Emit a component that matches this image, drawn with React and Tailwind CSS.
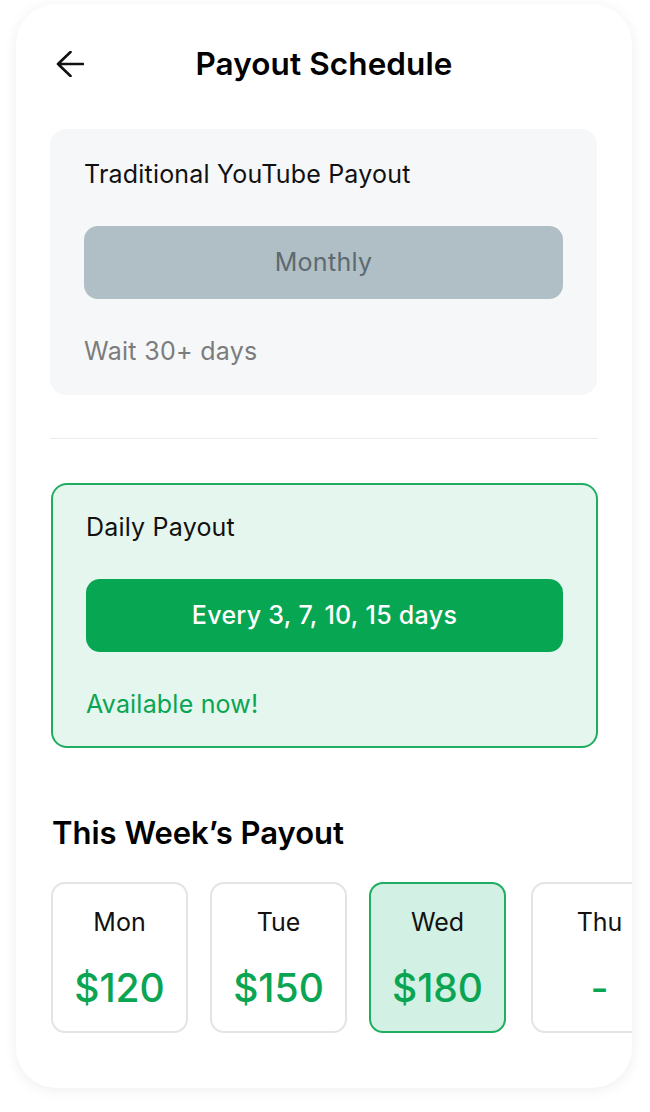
const days = [
  { name: "Mon", amount: "$120" },
  { name: "Tue", amount: "$150" },
  { name: "Wed", amount: "$180", active: true },
  { name: "Thu", amount: "-" },
];

const App = () => {
  return (
    <div
      className="min-h-screen bg-white pt-[4px] px-[16px]"
      style={{ fontFamily: "Inter, 'Noto Sans', sans-serif" }}
    >
      <div className="w-[616px] h-[1084px] bg-white rounded-[40px] overflow-hidden shadow-[0_2px_14px_rgba(0,0,0,0.07)] px-[34px] pt-[30px]">
        {/* Header */}
        <div className="relative h-[60px] flex items-center justify-center">
          <button className="absolute left-[6px] top-1/2 -translate-y-1/2">
            <svg width="28" height="26" viewBox="0 0 28 26" fill="none">
              <path
                d="M27 13H2M14.5 1L2 13L14.5 25"
                stroke="#111"
                strokeWidth="2.6"
                strokeLinecap="round"
                strokeLinejoin="round"
              />
            </svg>
          </button>
          <h1 className="text-[31.5px] font-semibold text-black leading-[40px] tracking-[0.1px]">
            Payout Schedule
          </h1>
        </div>

        {/* Traditional card */}
        <div className="mt-[35px] mr-px bg-[#f6f7f9] rounded-[16px] px-[34px] pt-[29px] pb-[28px]">
          <p className="text-[25px] leading-[32px] tracking-[0.2px] text-[#111]">
            Traditional YouTube Payout
          </p>
          <div className="mt-[36px] h-[73px] rounded-[14px] bg-[#b0bec5] flex items-center justify-center">
            <span className="text-[25px] tracking-[0.3px] text-[#5d6a71]">Monthly</span>
          </div>
          <p className="mt-[36px] text-[25px] leading-[32px] tracking-[0.3px] text-[#7c7c7c]">
            Wait 30+ days
          </p>
        </div>

        <div className="mt-[43px] h-px bg-[#ececec]" />

        {/* Daily card */}
        <div className="mt-[44px] ml-px bg-[#e5f6ee] border-2 border-[#1fae5f] rounded-[16px] px-[33px] pt-[26px] pb-[26px]">
          <p className="text-[25px] leading-[32px] tracking-[0.2px] text-[#111]">Daily Payout</p>
          <div className="mt-[36px] h-[73px] rounded-[14px] bg-[#07a653] flex items-center justify-center">
            <span className="text-[25px] font-medium tracking-[0.3px] text-white">
              Every 3, 7, 10, 15 days
            </span>
          </div>
          <p className="mt-[36px] text-[25px] leading-[32px] tracking-[0.2px] text-[#0aa553]">
            Available now!
          </p>
        </div>

        {/* Week */}
        <h2 className="mt-[65px] ml-[2px] text-[31px] font-semibold leading-[40px] text-black">
          This Week’s Payout
        </h2>
        <div className="mt-[29px] ml-px -mr-[34px] flex gap-[22px] overflow-hidden">
          {days.map((d, i) => (
            <div
              key={d.name}
              className={`shrink-0 w-[137px] h-[151px] rounded-[14px] border-2 flex flex-col items-center pt-[22px] ${
                d.active
                  ? "bg-[#d2f0e3] border-[#1fae5f]"
                  : "bg-white border-[#e4e4e4]"
              } ${i === 3 ? "ml-[3px]" : ""}`}
            >
              <span className="text-[25px] leading-[32px] text-[#111]">
                {d.name}
              </span>
              <span className="mt-[26px] text-[39px] leading-[48px] font-medium text-[#0aa553]">
                {d.amount}
              </span>
            </div>
          ))}
        </div>
      </div>
    </div>
  );
};

export default App;
